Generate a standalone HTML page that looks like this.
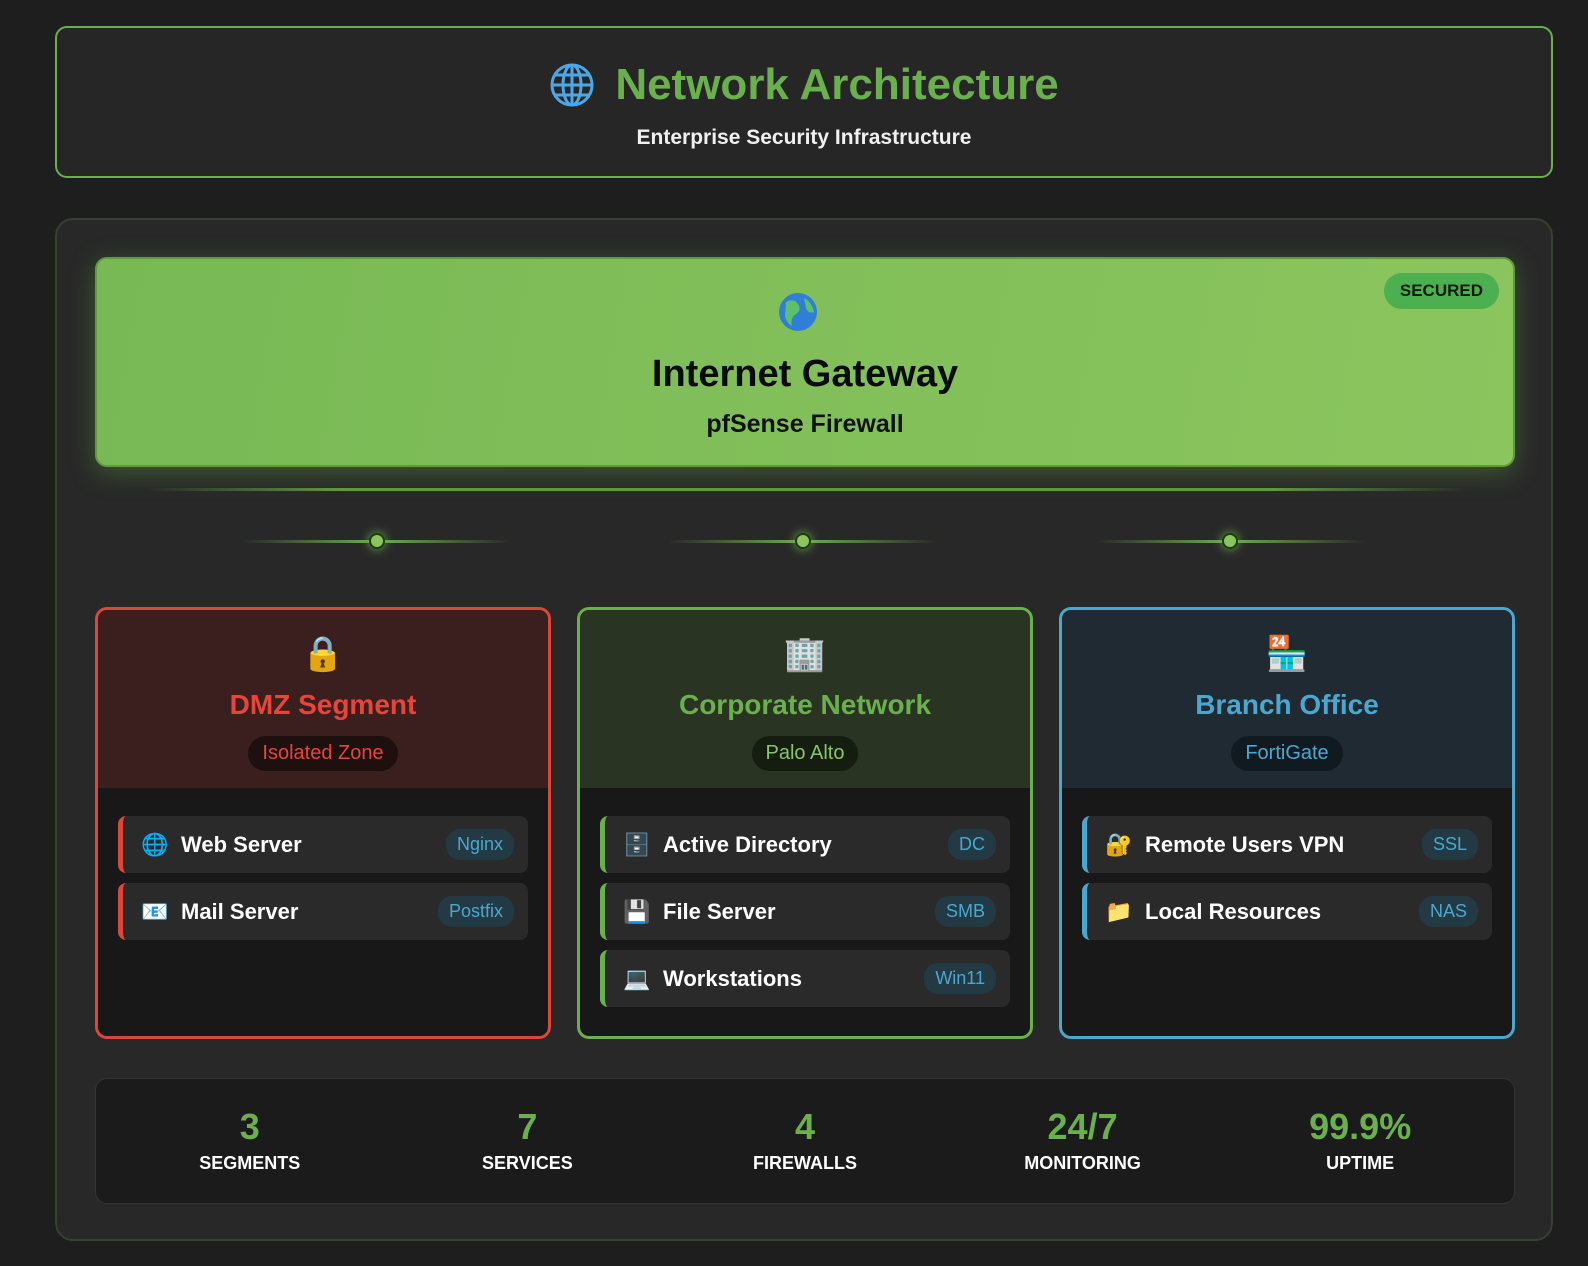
<!DOCTYPE html>
<html><head><meta charset="utf-8"><style>
*{box-sizing:border-box;margin:0;padding:0}
body{width:1588px;height:1266px;background:#1e1e1e;font-family:"Liberation Sans",sans-serif;position:relative;overflow:hidden;color:#fff}
.hdr{position:absolute;left:55px;top:26px;width:1498px;height:152px;border:2px solid #6ab04c;border-radius:12px;background:#262626;text-align:center}
.hdr h1{margin-top:32px;font-size:44px;color:#6ab04c;font-weight:bold;display:flex;justify-content:center;align-items:center;gap:20px}
.hdr p{margin-top:16px;font-size:21px;font-weight:bold;color:#f0f0f0}
.main{position:absolute;left:55px;top:218px;width:1498px;height:1023px;border:2px solid #34422e;border-radius:18px;background:#282828}
.gw{position:absolute;left:38px;top:37px;width:1420px;height:210px;border-radius:12px;background:linear-gradient(100deg,#78b955,#8bc55e);border:2px solid #5f9a43;box-shadow:0 6px 26px rgba(110,180,75,.35);text-align:center}
.gw h2{font-size:38px;color:#0a0a0a;margin-top:94px}
.gw p{font-size:25px;font-weight:bold;color:#111;margin-top:14px}
.sec{position:absolute;right:14px;top:14px;background:#4caf50;color:#0c1a0c;font-weight:bold;font-size:17px;padding:8px 16px;border-radius:18px}
.ln{position:absolute;left:90px;top:268px;width:1320px;height:3px;background:linear-gradient(90deg,transparent,#5f9a43 15%,#5f9a43 85%,transparent)}
.cn{position:absolute;top:320px;width:270px;height:3px;background:linear-gradient(90deg,transparent,#6ab04c,transparent)}
.dot{position:absolute;top:-7px;left:127px;width:16px;height:16px;border-radius:50%;background:#8bc55e;border:2px solid #1e3a12;box-shadow:0 0 10px #6ab04c}
.card{position:absolute;top:387px;width:456px;height:432px;border-radius:12px;border:3px solid;background:#181818;overflow:hidden}
.ch{height:178px;text-align:center;padding-top:24px}
.ch .ic{font-size:34px;height:42px}
.ch h3{font-size:28px;margin-top:13px}
.tag{display:inline-block;margin-top:15px;padding:6px 14px;border-radius:18px;background:#141414;font-size:20px}
.items{padding:28px 20px 0 20px}
.it{height:57px;margin-bottom:10px;border-radius:8px;background:#2a2a2a;border-left:5px solid;display:flex;align-items:center;padding:0 14px 0 18px;font-size:22px;font-weight:bold}
.it .i{width:40px;font-size:22px}
.it .n{flex:1}
.it .b{background:#233a44;color:#4aa8d0;font-size:18px;font-weight:normal;padding:5px 11px;border-radius:14px}
.stats{position:absolute;left:38px;top:858px;width:1420px;height:126px;border:1px solid #333;border-radius:12px;background:#1b1b1b;display:flex;padding:0 15px}
.st{flex:1;text-align:center;padding-top:27px}
.st b{display:block;font-size:36px;color:#6ab04c}
.st span{display:block;font-size:18px;font-weight:bold;margin-top:5px}
</style></head><body>
<div class="hdr"><h1><svg width="46" height="46" viewBox="0 0 46 46"><g fill="none" stroke="#4aa8e8" stroke-width="3"><circle cx="23" cy="23" r="20"/><ellipse cx="23" cy="23" rx="9" ry="20"/><line x1="23" y1="3" x2="23" y2="43"/><line x1="3" y1="23" x2="43" y2="23"/><path d="M6 13h34M6 33h34"/></g></svg>Network Architecture</h1><p>Enterprise Security Infrastructure</p></div>
<div class="main">
<div class="gw"><div class="sec">SECURED</div>
<svg style="position:absolute;left:681px;top:33px" width="40" height="40"><circle cx="20" cy="20" r="19" fill="#2f7fd6"/><path d="M8 10q8-4 12 2t-2 10-4 12q-6-4-7-10zM26 6q8 4 10 14-6 2-8-4z" fill="#5cc16a"/></svg>
<h2>Internet Gateway</h2><p>pfSense Firewall</p></div>
<div class="ln"></div>
<div class="cn" style="left:185px"><div class="dot"></div></div>
<div class="cn" style="left:611px"><div class="dot"></div></div>
<div class="cn" style="left:1038px"><div class="dot"></div></div>

<div class="card" style="left:38px;border-color:#e0453a">
<div class="ch" style="background:#3b1f1f"><div class="ic">🔒</div><h3 style="color:#e8453a">DMZ Segment</h3><div class="tag" style="color:#e8453a;background:#1f1010">Isolated Zone</div></div>
<div class="items">
<div class="it" style="border-color:#e0453a"><span class="i">🌐</span><span class="n">Web Server</span><span class="b">Nginx</span></div>
<div class="it" style="border-color:#e0453a"><span class="i">📧</span><span class="n">Mail Server</span><span class="b">Postfix</span></div>
</div></div>

<div class="card" style="left:520px;border-color:#6ab04c">
<div class="ch" style="background:#2a3422"><div class="ic">🏢</div><h3 style="color:#6ab04c">Corporate Network</h3><div class="tag" style="color:#8bc55e;background:#151d11">Palo Alto</div></div>
<div class="items">
<div class="it" style="border-color:#6ab04c"><span class="i">🗄️</span><span class="n">Active Directory</span><span class="b">DC</span></div>
<div class="it" style="border-color:#6ab04c"><span class="i">💾</span><span class="n">File Server</span><span class="b">SMB</span></div>
<div class="it" style="border-color:#6ab04c"><span class="i">💻</span><span class="n">Workstations</span><span class="b">Win11</span></div>
</div></div>

<div class="card" style="left:1002px;border-color:#4aa8d0">
<div class="ch" style="background:#1f2a33"><div class="ic">🏪</div><h3 style="color:#4aa8d0">Branch Office</h3><div class="tag" style="color:#4aa8d0;background:#111a20">FortiGate</div></div>
<div class="items">
<div class="it" style="border-color:#4aa8d0"><span class="i">🔐</span><span class="n">Remote Users VPN</span><span class="b">SSL</span></div>
<div class="it" style="border-color:#4aa8d0"><span class="i">📁</span><span class="n">Local Resources</span><span class="b">NAS</span></div>
</div></div>

<div class="stats">
<div class="st"><b>3</b><span>SEGMENTS</span></div>
<div class="st"><b>7</b><span>SERVICES</span></div>
<div class="st"><b>4</b><span>FIREWALLS</span></div>
<div class="st"><b>24/7</b><span>MONITORING</span></div>
<div class="st"><b>99.9%</b><span>UPTIME</span></div>
</div>
</div>
</body></html>
